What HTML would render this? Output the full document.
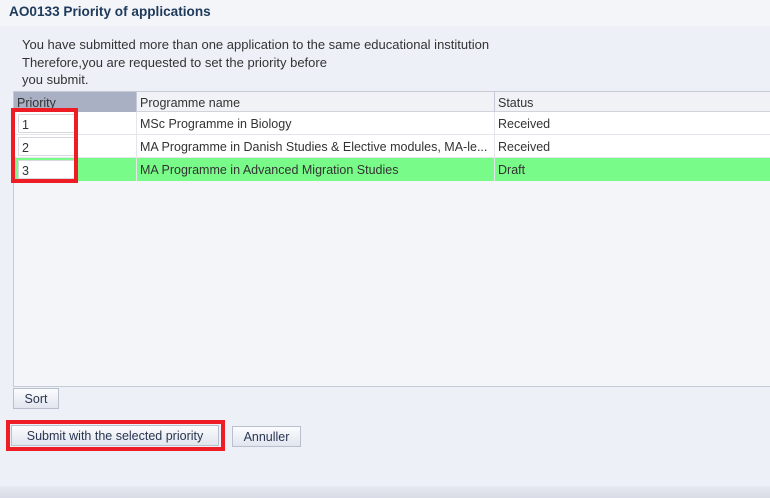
<!DOCTYPE html>
<html><head><style>
*{margin:0;padding:0;box-sizing:border-box}
body{width:770px;height:498px;background:#edf0f7;font-family:"Liberation Sans",sans-serif;font-size:12.5px;color:#333;position:relative;overflow:hidden}
.abs{position:absolute}
.title{left:9px;top:4px;font-weight:bold;color:#1e3a5a;font-size:13.6px}
.msg{left:22px;top:36px;line-height:17.5px;color:#333;font-size:13px}
.table{left:13px;top:91px;width:757px;height:296px;background:#f4f5f9;border:1px solid #c6cad6;border-right:none}
.hdr{position:absolute;top:0;left:0;right:0;height:20px;background:#f1f2f5;border-bottom:1px solid #d0d3dc}
.cell{position:absolute;padding-left:3px;line-height:25px;white-space:nowrap}
.row{position:absolute;left:0;right:0;height:23px;background:#fff;border-bottom:1px solid #e4e6ec}
.inp{position:absolute;left:4px;top:2px;width:58px;height:19px;background:#fff;border:1px solid #d6d8de;padding-left:3px;line-height:20px}
.btn{position:absolute;background:linear-gradient(#fbfcfe,#e1e5ee);border:1px solid #b9bfcc;color:#2a3550;text-align:center;line-height:20px}
.red{position:absolute;border:4px solid #ee1c24}
</style></head><body>
<div class="abs" style="left:0;top:0;width:770px;height:26px;background:#f4f5f9"></div>
<div class="abs title">AO0133 Priority of applications</div>
<div class="abs msg">You have submitted more than one application to the same educational institution<br>Therefore,you are requested to set the priority before<br>you submit.</div>
<div class="abs table">
 <div class="hdr">
  <div class="cell" style="left:0;width:122px;height:20px;background:#a9b0c3;line-height:22px">Priority</div>
  <div class="cell" style="left:122px;border-left:1px solid #c6cad6;height:20px;line-height:22px">Programme name</div>
  <div class="cell" style="left:480px;border-left:1px solid #c6cad6;height:20px;line-height:22px">Status</div>
 </div>
 <div class="row" style="top:20px"><div class="inp">1</div><div class="cell" style="left:122px;border-left:1px solid #e4e6ec;height:23px">MSc Programme in Biology</div><div class="cell" style="left:480px;border-left:1px solid #e4e6ec;height:23px">Received</div></div>
 <div class="row" style="top:43px"><div class="inp">2</div><div class="cell" style="left:122px;border-left:1px solid #e4e6ec;height:23px">MA Programme in Danish Studies &amp; Elective modules, MA-le...</div><div class="cell" style="left:480px;border-left:1px solid #e4e6ec;height:23px">Received</div></div>
 <div class="row" style="top:66px;background:#78fb88;border-bottom:none"><div class="inp">3</div><div class="cell" style="left:122px;border-left:1px solid #e4e6ec;height:23px">MA Programme in Advanced Migration Studies</div><div class="cell" style="left:480px;border-left:1px solid #e4e6ec;height:23px">Draft</div></div>
</div>
<div class="red" style="left:11px;top:108px;width:67px;height:75px"></div>
<div class="btn" style="left:13px;top:388px;width:46px;height:21px">Sort</div>
<div class="btn" style="left:11px;top:425px;width:208px;height:21px">Submit with the selected priority</div>
<div class="red" style="left:6px;top:420px;width:219px;height:31px"></div>
<div class="btn" style="left:232px;top:426px;width:69px;height:21px">Annuller</div>
<div class="abs" style="left:0;top:486px;width:770px;height:12px;background:linear-gradient(#e6e9f1,#d9dce6)"></div>
</body></html>
